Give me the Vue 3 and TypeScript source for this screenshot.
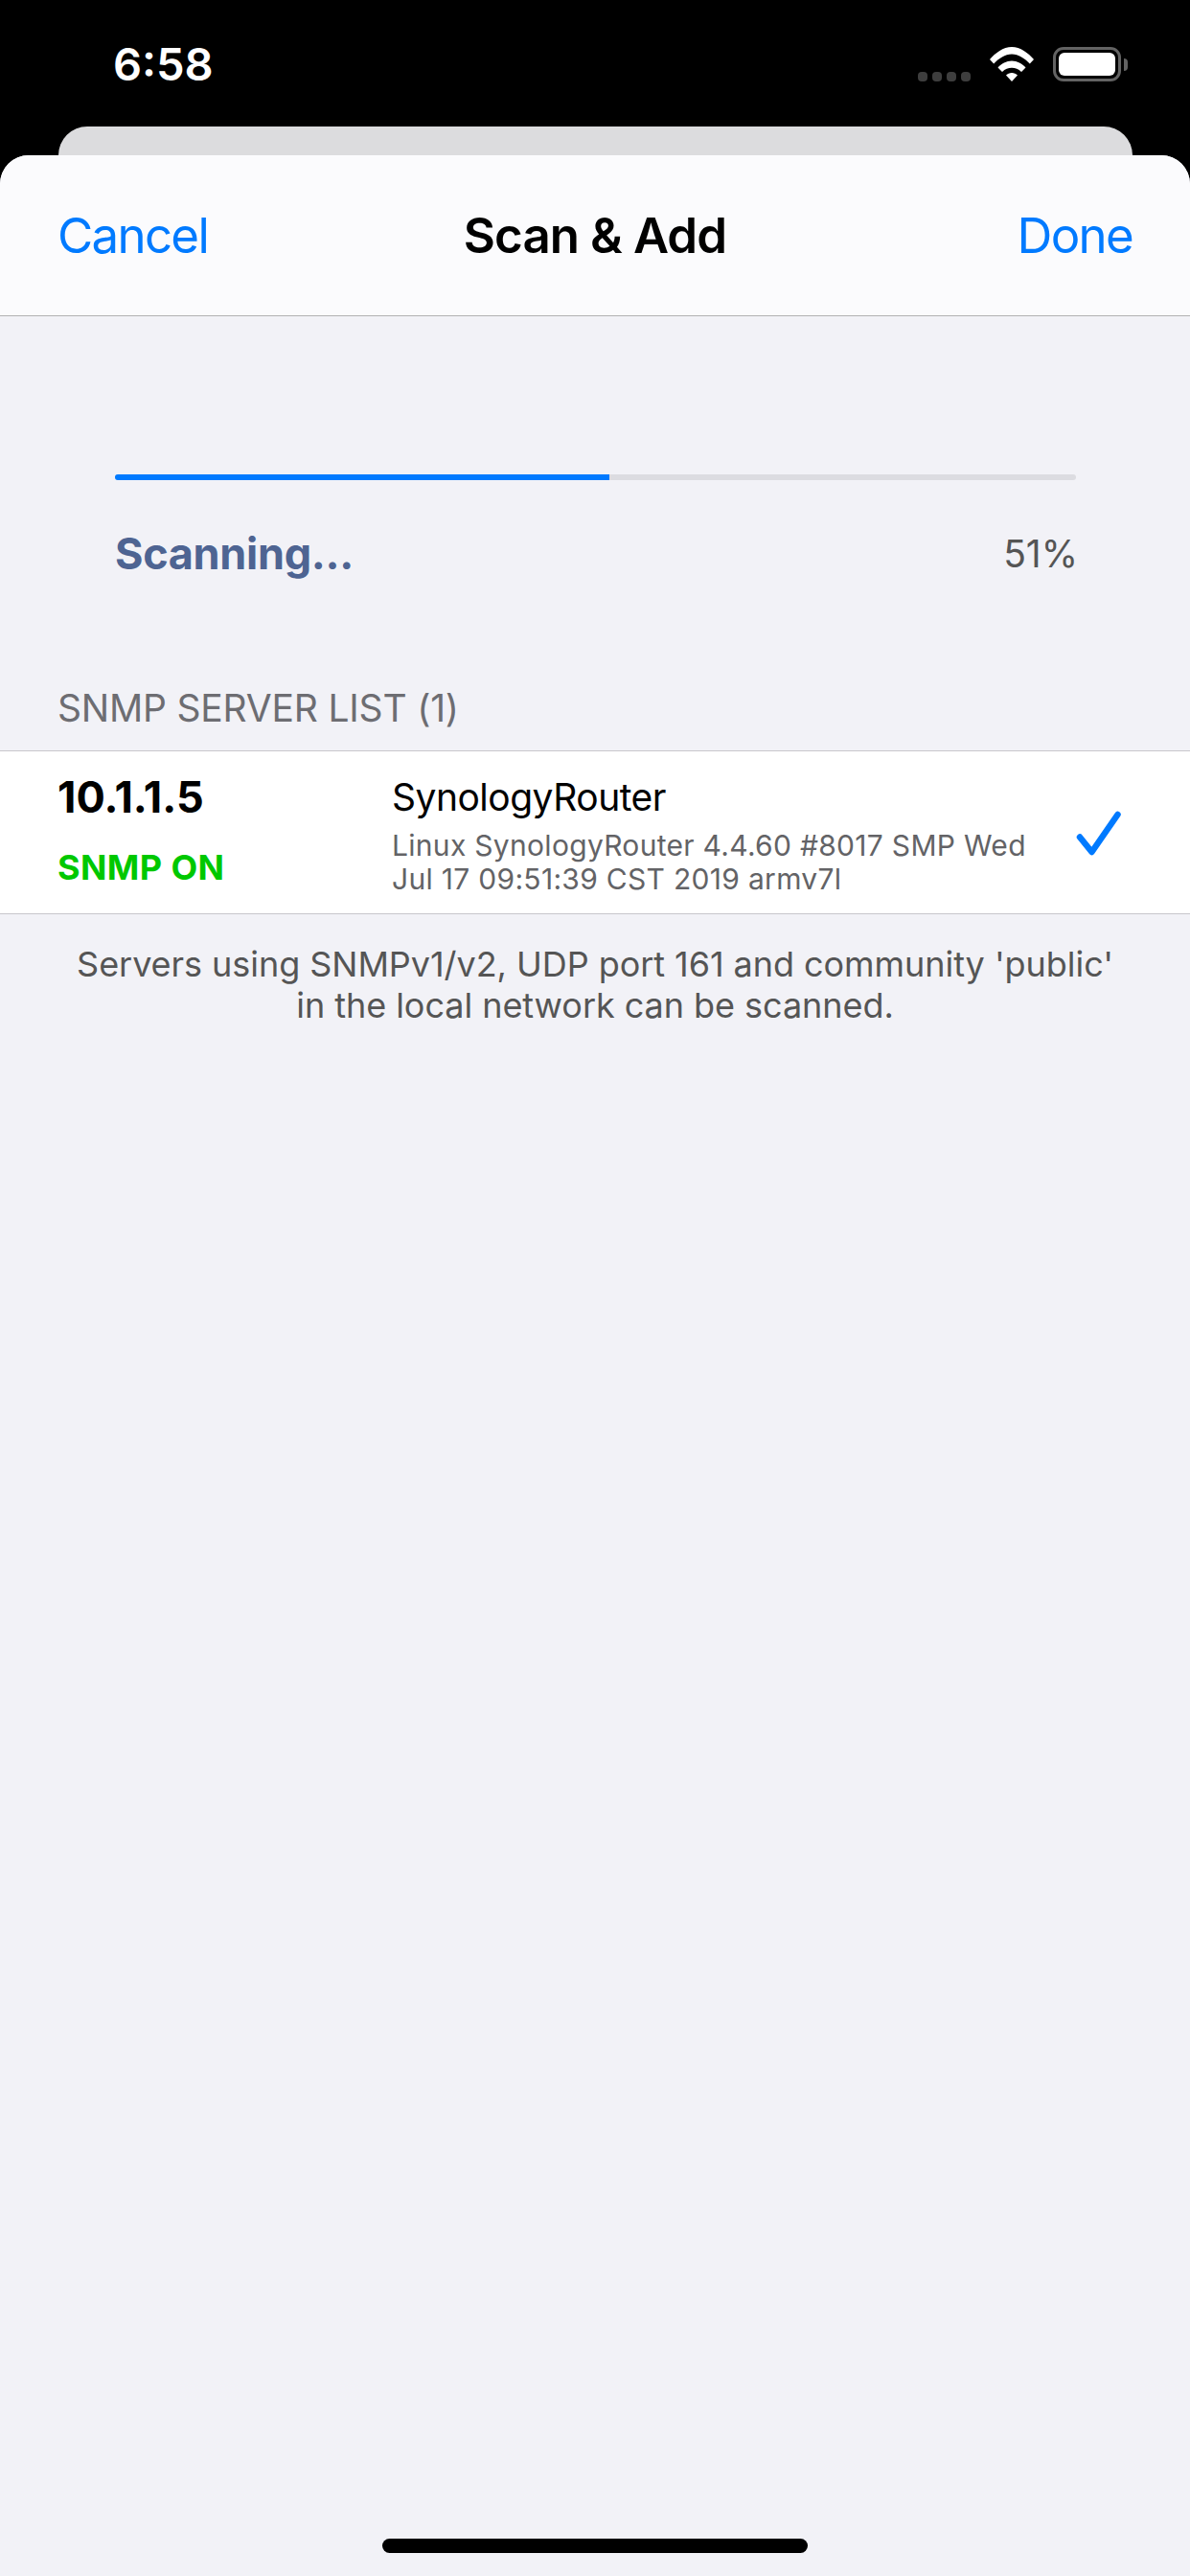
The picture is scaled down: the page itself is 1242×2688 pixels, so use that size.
<script setup lang="ts">
interface Server {
  ip: string;
  status: string;
  name: string;
  detail: string;
}

const progress = 0.5145;

const servers: Server[] = [
  {
    ip: '10.1.1.5',
    status: 'SNMP ON',
    name: 'SynologyRouter',
    detail: 'Linux SynologyRouter 4.4.60 #8017 SMP Wed Jul 17 09:51:39 CST 2019 armv7l',
  },
];
</script>

<template>
  <div class="screen">
    <div class="status-bar">
      <span class="time">6:58</span>
      <div class="status-icons">
        <div class="signal"><i></i><i></i><i></i><i></i></div>
        <svg class="wifi" width="48" height="36" viewBox="0 0 48 36">
          <path d="M1 13C7 6.200 15 0 24 0s17 6.200 23 13l-4.200 4.500C37.500 12 31 7.500 24 7.500S10.500 12 5.200 17.500z" fill="#fff" />
          <path d="M9.500 21.500C13 17.500 18.500 14.500 24 14.500s11 3 14.500 7L34 26C31 23 27.700 21.700 24 21.700S17 23 14 26z" fill="#fff" />
          <path d="M18 29.500c1.500-1.500 3.700-2.400 6-2.400s4.500.9 6 2.400L24 36z" fill="#fff" />
        </svg>
        <div class="battery">
          <div class="battery-body"><div class="battery-fill"></div></div>
          <div class="battery-cap"></div>
        </div>
      </div>
    </div>

    <div class="back-card"></div>

    <div class="sheet">
      <header class="nav">
        <span class="nav-btn">Cancel</span>
        <span class="nav-title">Scan &amp; Add</span>
        <span class="nav-btn nav-btn-right">Done</span>
      </header>

      <section class="progress-box">
        <div class="track">
          <div class="fill" :style="{ width: progress * 100 + '%' }"></div>
        </div>
        <div class="progress-info">
          <span class="scanning">Scanning...</span>
          <span class="percent">{{ Math.floor(progress * 100) }}%</span>
        </div>
      </section>

      <div class="section-title">SNMP SERVER LIST ({{ servers.length }})</div>

      <div class="list">
        <div v-for="s in servers" :key="s.ip" class="row">
          <div class="col-left">
            <div class="ip">{{ s.ip }}</div>
            <div class="snmp">{{ s.status }}</div>
          </div>
          <div class="col-mid">
            <div class="name">{{ s.name }}</div>
            <div class="detail">{{ s.detail }}</div>
          </div>
          <svg class="check" width="50" height="50" viewBox="0 0 50 50">
            <path d="M5 27.500 L17.500 43 L44.500 4" fill="none" stroke="#007aff" stroke-width="6.500" stroke-linecap="round" stroke-linejoin="round" />
          </svg>
        </div>
      </div>

      <p class="footer-note">
        Servers using SNMPv1/v2, UDP port 161 and community 'public'<br />in the local network can be scanned.
      </p>

      <div class="home-bar"></div>
    </div>
  </div>
</template>

<style>
html,
body {
  margin: 0;
  background: #000;
}
</style>

<style scoped>
.screen {
  width: 1242px;
  height: 2688px;
  background: #000;
  display: flex;
  flex-direction: column;
  font-family: Inter, "Liberation Sans", sans-serif;
  overflow: hidden;
}

.status-bar {
  height: 132px;
  flex: none;
  display: flex;
  justify-content: space-between;
  align-items: flex-start;
  padding: 0 65px 0 118px;
  box-sizing: border-box;
}

.time {
  margin-top: 37px;
  color: #fff;
  font-size: 47px;
  line-height: 60px;
  font-weight: 600;
  letter-spacing: 0;
}

.status-icons {
  display: flex;
  align-items: flex-start;
  padding-top: 49px;
}

.signal {
  display: flex;
  gap: 5px;
  margin-top: 26px;
  margin-right: 19px;
}

.signal i {
  width: 10px;
  height: 10px;
  border-radius: 4px;
  background: #3e3e3e;
}

.wifi {
  margin-right: 19px;
}

.battery {
  display: flex;
  align-items: center;
}

.battery-body {
  width: 71px;
  height: 36px;
  box-sizing: border-box;
  border: 3px solid #636363;
  border-radius: 11px;
  padding: 3px;
}

.battery-fill {
  height: 100%;
  background: #fff;
  border-radius: 6px;
}

.battery-cap {
  width: 4px;
  height: 13px;
  margin-left: 3px;
  background: #636363;
  border-radius: 0 4px 4px 0;
}

.back-card {
  height: 30px;
  flex: none;
  margin: 0 60px 0 61px;
  background: #dcdcde;
  border-radius: 30px 30px 0 0;
}

.sheet {
  flex: 1;
  background: #f2f2f7;
  border-radius: 30px 30px 0 0;
  overflow: hidden;
  display: flex;
  flex-direction: column;
  position: relative;
}

.nav {
  height: 168px;
  box-sizing: border-box;
  flex: none;
  display: grid;
  grid-template-columns: 1fr auto 1fr;
  align-items: center;
  padding: 0 60px;
  background: #fbfbfd;
  border-bottom: 1px solid #b2b2b2;
}

.nav-btn {
  color: #007aff;
  font-size: 51px;
  letter-spacing: -1.7px;
}

.nav-btn-right {
  justify-self: end;
}

.nav-title {
  color: #000;
  font-size: 51px;
  font-weight: 600;
  letter-spacing: -0.9px;
}

.progress-box {
  padding: 165px 119px 0 120px;
}

.track {
  height: 6px;
  background: #dcdce1;
  border-radius: 3px;
  overflow: hidden;
}

.fill {
  height: 100%;
  background: #007aff;
}

.progress-info {
  display: flex;
  justify-content: space-between;
  align-items: center;
  margin-top: 49px;
  height: 54px;
}

.scanning {
  color: #4e6492;
  font-size: 45px;
  font-weight: 700;
  letter-spacing: -0.3px;
}

.percent {
  color: #555;
  font-size: 39px;
  letter-spacing: 0;
  margin-right: -2px;
}

.section-title {
  margin-top: 113px;
  padding-left: 60px;
  color: #6d6d72;
  font-size: 39px;
  line-height: 44px;
  letter-spacing: -0.2px;
}

.list {
  margin-top: 22px;
  background: #fff;
  border-top: 1px solid #c8c7cc;
  border-bottom: 1px solid #c8c7cc;
}

.row {
  height: 169px;
  display: flex;
  padding: 0 70px 0 60px;
}

.col-left {
  width: 349px;
  flex: none;
}

.ip {
  margin-top: 23px;
  color: #000;
  font-size: 45px;
  line-height: 50px;
  font-weight: 700;
  letter-spacing: 0;
}

.snmp {
  margin-top: 26px;
  color: #00c800;
  font-size: 36px;
  line-height: 44px;
  font-weight: 700;
  letter-spacing: 0.4px;
}

.col-mid {
  flex: 1;
  min-width: 0;
}

.name {
  margin-top: 23px;
  color: #000;
  font-size: 39px;
  line-height: 50px;
  letter-spacing: -0.5px;
}

.detail {
  width: 700px;
  margin-top: 8px;
  color: #636366;
  font-size: 30px;
  line-height: 35px;
  letter-spacing: 0.3px;
}

.check {
  flex: none;
  margin-top: 62px;
}

.footer-note {
  margin: 31px 0 0;
  text-align: center;
  color: #555;
  font-size: 36px;
  line-height: 43px;
  letter-spacing: -0.05px;
}

.home-bar {
  position: absolute;
  left: 399px;
  bottom: 24px;
  width: 444px;
  height: 15px;
  border-radius: 8px;
  background: #000;
}
</style>
